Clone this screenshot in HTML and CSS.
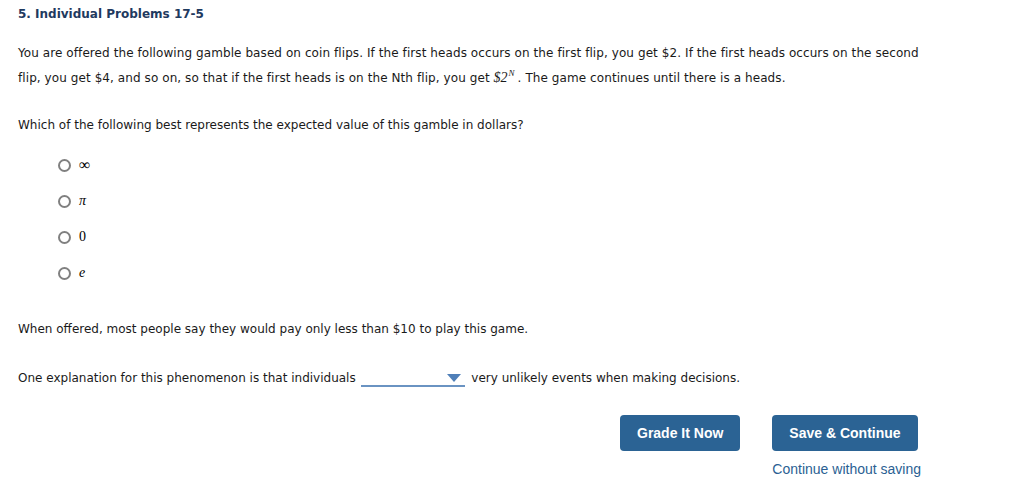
FILE: index.html
```html
<!DOCTYPE html>
<html>
<head>
<meta charset="utf-8">
<link rel="stylesheet" href="styles.css">
</head>
<body>
<div class="page">
  <h1 class="title">5. Individual Problems 17-5</h1>
  <p class="para">You are offered the following gamble based on coin flips. If the first heads occurs on the first flip, you get $2. If the first heads occurs on the second flip, you get $4, and so on, so that if the first heads is on the Nth flip, you get <span class="math">$2<span class="sup">N</span></span>. The game continues until there is a heads.</p>
  <p class="question">Which of the following best represents the expected value of this gamble in dollars?</p>
  <ul class="options">
    <li class="option"><span class="radio"></span><span class="opt-label inf">∞</span></li>
    <li class="option"><span class="radio"></span><span class="opt-label ital">π</span></li>
    <li class="option"><span class="radio"></span><span class="opt-label">0</span></li>
    <li class="option"><span class="radio"></span><span class="opt-label ital">e</span></li>
  </ul>
  <p class="offered">When offered, most people say they would pay only less than $10 to play this game.</p>
  <p class="explain">One explanation for this phenomenon is that individuals <span class="select"><span class="caret"></span></span> very unlikely events when making decisions.</p>
  <div class="actions">
    <button class="btn">Grade It Now</button>
    <div class="save-col">
      <button class="btn">Save &amp; Continue</button>
      <a class="link" href="#">Continue without saving</a>
    </div>
  </div>
</div>
</body>
</html>
```
FILE: styles.css
```css
html, body {
  margin: 0;
  padding: 0;
  background: #fff;
}
.page {
  padding: 6px 18px 0 18px;
  font-family: "DejaVu Sans", Verdana, sans-serif;
  font-size: 12px;
  color: #1a1a1a;
}
.title {
  margin: 0;
  font-size: 12px;
  font-weight: bold;
  color: #1f3a5f;
  line-height: 16px;
}
.para {
  margin: 19px 0 0 0;
  line-height: 25px;
  width: 920px;
  letter-spacing: 0.08px;
}
.math {
  font-family: "Liberation Serif", "Times New Roman", serif;
  font-size: 14px;
  line-height: 14px;
  font-style: italic;
  letter-spacing: 0;
  margin-right: 3px;
}
.sup {
  display: inline-block;
  font-size: 9px;
  line-height: 9px;
  vertical-align: 6px;
  margin-left: 1px;
}
.question {
  margin: 24px 0 0 0;
  line-height: 20px;
}
.options {
  list-style: none;
  margin: 12px 0 0 0;
  padding: 0 0 0 40px;
}
.option {
  display: flex;
  align-items: center;
  height: 36px;
}
.radio {
  width: 9px;
  height: 9px;
  border: 2px solid #808080;
  border-radius: 50%;
  box-sizing: content-box;
}
.opt-label {
  margin-left: 8px;
  font-family: "Liberation Serif", "Times New Roman", serif;
  font-size: 14px;
  color: #000;
}
.ital { font-style: italic; }
.inf { font-size: 16px; }
.offered {
  margin: 28px 0 0 0;
  line-height: 20px;
}
.explain {
  margin: 29px 0 0 0;
  line-height: 20px;
  display: flex;
  align-items: center;
  white-space: pre;
}
.select {
  display: inline-block;
  width: 104px;
  height: 16px;
  border-bottom: 2px solid #6a93c2;
  position: relative;
  margin: 0 3px 0 1px;
}
.caret {
  position: absolute;
  right: 4px;
  top: 5px;
  width: 0;
  height: 0;
  border-left: 7px solid transparent;
  border-right: 7px solid transparent;
  border-top: 8px solid #4f7fb8;
}
.actions {
  display: flex;
  gap: 32px;
  margin: 27px 0 0 602px;
}
.save-col {
  display: flex;
  flex-direction: column;
  align-items: flex-start;
}
.btn {
  height: 36px;
  padding: 0 17px;
  border: none;
  border-radius: 4px;
  background: #2b6394;
  color: #fff;
  font-family: "Liberation Sans", Arial, sans-serif;
  font-weight: bold;
  font-size: 14px;
  cursor: pointer;
}
.link {
  margin-top: 10px;
  font-family: "Liberation Sans", Arial, sans-serif;
  font-size: 14px;
  color: #2b5f93;
  text-decoration: none;
}
```
